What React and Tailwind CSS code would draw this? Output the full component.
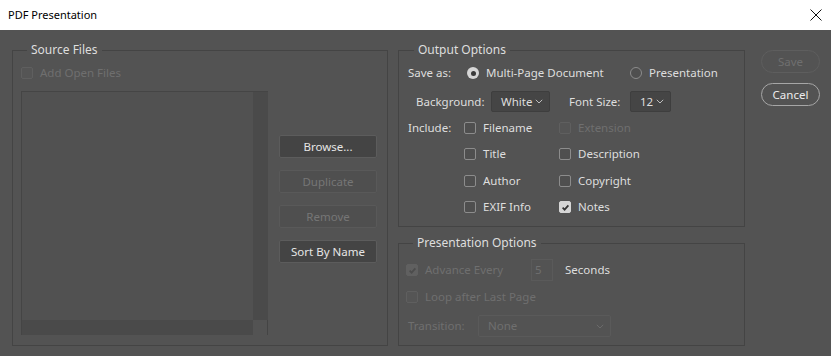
import React from "react"

const txt = "text-[#dedede]"
const dim = "text-[#6f6f6f]"

function Check({ checked, disabled }) {
  return (
    <span
      className={`w-[12px] h-[12px] rounded-[2px] border flex items-center justify-center shrink-0 ${
        disabled
          ? "border-[#5f5f5f] bg-[#555555]"
          : checked
          ? "border-[#d6d6d6] bg-[#d6d6d6]"
          : "border-[#8c8c8c] bg-[#4f4f4f]"
      } ${disabled && checked ? "bg-[#606060] border-[#606060]" : ""}`}
    >
      {checked && (
        <svg width="9" height="9" viewBox="0 0 10 10">
          <path
            d="M1.8 5.2 L4 7.4 L8.2 2.6"
            fill="none"
            stroke={disabled ? "#4c4c4c" : "#333333"}
            strokeWidth="1.9"
          />
        </svg>
      )}
    </span>
  )
}

function Radio({ checked }) {
  return checked ? (
    <span className="w-[12px] h-[12px] rounded-full bg-[#d6d6d6] flex items-center justify-center shrink-0">
      <span className="w-[5px] h-[5px] rounded-full bg-[#3a3a3a]" />
    </span>
  ) : (
    <span className="w-[12px] h-[12px] rounded-full border border-[#8c8c8c] bg-[#4f4f4f] shrink-0" />
  )
}

function Chevron({ color = "#bdbdbd" }) {
  return (
    <svg width="8" height="5" viewBox="0 0 8 5">
      <path d="M0.8 0.8 L4 4 L7.2 0.8" fill="none" stroke={color} strokeWidth="1" />
    </svg>
  )
}

function Option({ label, checked, disabled }) {
  return (
    <div className="flex items-center gap-[7px]">
      <Check checked={checked} disabled={disabled} />
      <span className={disabled ? dim : txt}>{label}</span>
    </div>
  )
}

function Btn({ children, disabled }) {
  return (
    <div
      className={`h-[23px] flex items-center justify-center rounded-[2px] border ${
        disabled
          ? "bg-[#4f4f4f] border-[#595959] text-[#767676]"
          : "bg-[#444444] border-[#5c5c5c] text-[#e6e6e6]"
      }`}
    >
      {children}
    </div>
  )
}

export default function App() {
  return (
    <div
      className="w-[831px] h-[356px] bg-[#535353] text-[11.5px] leading-[16px] overflow-hidden"
      style={{ fontFamily: '"Noto Sans", "Open Sans", sans-serif' }}
    >
      {/* title bar */}
      <div className="h-[30px] bg-white flex items-center justify-between pl-[8px] pr-[9px]">
        <span className="text-[11px] text-black">PDF Presentation</span>
        <svg width="12" height="12" viewBox="0 0 12 12">
          <path d="M0.5 0.5 L11.5 11.5 M11.5 0.5 L0.5 11.5" stroke="#111" strokeWidth="1" />
        </svg>
      </div>

      <div className="flex pl-[12px] pt-[12px]">
        {/* Source Files */}
        <fieldset className="w-[376px] h-[304px] border border-[#444444] pl-[8px]">
          <legend className={`ml-[6px] px-[4px] text-[12px] leading-[16px] ${txt}`}>Source Files</legend>
          <div className="mt-[8px] h-[14px] flex items-center gap-[7px]">
            <Check disabled />
            <span className={dim}>Add Open Files</span>
          </div>
          <div className="mt-[11px] flex gap-[11px]">
            <div className="w-[247px] h-[244px] border-t border-l border-[#454545] bg-[#515151] flex flex-col">
              <div className="flex flex-1">
                <div className="flex-1" />
                <div className="w-[15px] bg-[#4a4a4a]" />
              </div>
              <div className="flex h-[15px]">
                <div className="flex-1 bg-[#4a4a4a]" />
                <div className="w-[15px] bg-[#535353] border-r border-[#444444]" />
              </div>
            </div>
            <div className="w-[98px] pt-[44px] flex flex-col gap-[12px]">
              <Btn>Browse...</Btn>
              <Btn disabled>Duplicate</Btn>
              <Btn disabled>Remove</Btn>
              <Btn>Sort By Name</Btn>
            </div>
          </div>
        </fieldset>

        <div className="ml-[10px] flex flex-col">
          {/* Output Options */}
          <fieldset className="w-[347px] h-[185px] border border-[#444444] pl-[9px]">
            <legend className={`ml-[6px] px-[4px] text-[12px] leading-[16px] ${txt}`}>Output Options</legend>
            <div className="mt-[5px] h-[20px] flex items-center">
              <span className={`w-[59px] ${txt}`}>Save as:</span>
              <div className="w-[163px] flex items-center gap-[7px]">
                <Radio checked />
                <span className={txt}>Multi-Page Document</span>
              </div>
              <div className="flex items-center gap-[7px]">
                <Radio />
                <span className={txt}>Presentation</span>
              </div>
            </div>
            <div className="mt-[8px] h-[21px] flex items-center pl-[8px]">
              <span className={`w-[75px] ${txt}`}>Background:</span>
              <div className="w-[59px] h-[21px] rounded-[2px] border border-[#3e3e3e] bg-[#454545] flex items-center justify-between pl-[9px] pr-[6px]">
                <span className={txt}>White</span>
                <Chevron />
              </div>
              <span className={`ml-[19px] w-[61px] ${txt}`}>Font Size:</span>
              <div className="w-[41px] h-[21px] rounded-[2px] border border-[#3e3e3e] bg-[#454545] flex items-center justify-between pl-[9px] pr-[6px]">
                <span className={txt}>12</span>
                <Chevron />
              </div>
            </div>
            <div className="mt-[6px] flex">
              <span className={`w-[56px] h-[20px] flex items-center ${txt}`}>Include:</span>
              <div className="grid grid-cols-[95px_auto] gap-y-[6px]">
                <div className="h-[20px] flex items-center"><Option label="Filename" /></div>
                <div className="h-[20px] flex items-center"><Option label="Extension" disabled /></div>
                <div className="h-[20px] flex items-center"><Option label="Title" /></div>
                <div className="h-[20px] flex items-center"><Option label="Description" /></div>
                <div className="h-[21px] flex items-center"><Option label="Author" /></div>
                <div className="h-[21px] flex items-center"><Option label="Copyright" /></div>
                <div className="h-[20px] flex items-center"><Option label="EXIF Info" /></div>
                <div className="h-[20px] flex items-center"><Option label="Notes" checked /></div>
              </div>
            </div>
          </fieldset>

          {/* Presentation Options */}
          <fieldset className="mt-[8px] w-[347px] h-[111px] border border-[#444444] pl-[7px]">
            <legend className={`ml-[7px] px-[4px] text-[12px] leading-[16px] ${txt}`}>Presentation Options</legend>
            <div className="mt-[8px] h-[22px] flex items-center">
              <div className="w-[125px] flex items-center gap-[7px]">
                <Check checked disabled />
                <span className={dim}>Advance Every</span>
              </div>
              <div className="w-[22px] h-[22px] border border-[#5a5a5a] flex items-center pl-[3px]">
                <span className={dim}>5</span>
              </div>
              <span className={`ml-[12px] ${txt}`}>Seconds</span>
            </div>
            <div className="mt-[6px] h-[20px] flex items-center gap-[7px]">
              <Check disabled />
              <span className={dim}>Loop after Last Page</span>
            </div>
            <div className="mt-[8px] h-[22px] flex items-center pl-[2px]">
              <span className={`w-[70px] ${dim}`}>Transition:</span>
              <div className="w-[133px] h-[22px] rounded-[2px] border border-[#5a5a5a] flex items-center justify-between pl-[9px] pr-[6px]">
                <span className={dim}>None</span>
                <Chevron color="#6a6a6a" />
              </div>
            </div>
          </fieldset>
        </div>

        {/* dialog buttons */}
        <div className="ml-[16px] pt-[8px] w-[59px] flex flex-col gap-[10px]">
          <div className="h-[23px] rounded-full border border-[#5e5e5e] flex items-center justify-center text-[#6f6f6f]">
            Save
          </div>
          <div className="h-[23px] rounded-full border border-[#a6a6a6] flex items-center justify-center text-[#ececec]">
            Cancel
          </div>
        </div>
      </div>
    </div>
  )
}
